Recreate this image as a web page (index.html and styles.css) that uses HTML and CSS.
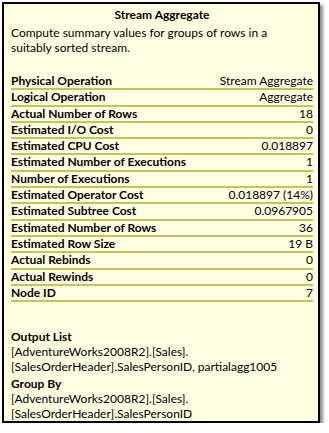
FILE: index.html
```html
<!DOCTYPE html>
<html>
<head>
<meta charset="utf-8">
<link rel="stylesheet" href="styles.css">
</head>
<body>
<div class="tip">
  <div class="title">Stream Aggregate</div>
  <div class="desc">Compute summary values for groups of rows in a suitably sorted stream.</div>
  <div class="props">
    <div class="row"><span class="k">Physical Operation</span><span class="v">Stream Aggregate</span></div>
    <div class="row"><span class="k">Logical Operation</span><span class="v">Aggregate</span></div>
    <div class="row"><span class="k">Actual Number of Rows</span><span class="v">18</span></div>
    <div class="row"><span class="k">Estimated I/O Cost</span><span class="v">0</span></div>
    <div class="row"><span class="k">Estimated CPU Cost</span><span class="v">0.018897</span></div>
    <div class="row"><span class="k">Estimated Number of Executions</span><span class="v">1</span></div>
    <div class="row"><span class="k">Number of Executions</span><span class="v">1</span></div>
    <div class="row"><span class="k">Estimated Operator Cost</span><span class="v">0.018897 (14%)</span></div>
    <div class="row"><span class="k">Estimated Subtree Cost</span><span class="v">0.0967905</span></div>
    <div class="row"><span class="k">Estimated Number of Rows</span><span class="v">36</span></div>
    <div class="row"><span class="k">Estimated Row Size</span><span class="v">19 B</span></div>
    <div class="row"><span class="k">Actual Rebinds</span><span class="v">0</span></div>
    <div class="row"><span class="k">Actual Rewinds</span><span class="v">0</span></div>
    <div class="row"><span class="k">Node ID</span><span class="v">7</span></div>
  </div>
  <div class="sect">
    <div class="h">Output List</div>
    <div class="t">[AdventureWorks2008R2].[Sales].<br>[SalesOrderHeader].SalesPersonID, partialagg1005</div>
    <div class="h h2">Group By</div>
    <div class="t">[AdventureWorks2008R2].[Sales].<br>[SalesOrderHeader].SalesPersonID</div>
  </div>
</div>
</body>
</html>
```
FILE: styles.css
```css
html, body { margin: 0; padding: 0; background: #ffffff; }
body { padding: 2px 0 0 2px; }
.tip {
  box-sizing: border-box;
  width: 318px;
  height: 421px;
  background: #ffffe1;
  border: 2px solid #000;
  box-shadow: 3px 3px 3px rgba(0,0,0,0.45);
  font-family: Lato, "Open Sans", sans-serif;
  font-size: 12px;
  color: #000;
  padding: 0 5px 0 7px;
}
.title { font-weight: bold; text-align: center; line-height: 15px; padding-top: 3px; }
.desc { line-height: 15px; padding-top: 3px; width: 262px; }
.props { margin-top: 19px; }
.row {
  display: flex;
  justify-content: space-between;
  line-height: 14.3px;
  border-bottom: 2px solid #c4c45c;
}
.k { font-weight: bold; }
.sect { margin-top: 27px; }
.h { font-weight: bold; line-height: 15px; }
.h2 { margin-top: 2px; }
.t { line-height: 15px; }
```
